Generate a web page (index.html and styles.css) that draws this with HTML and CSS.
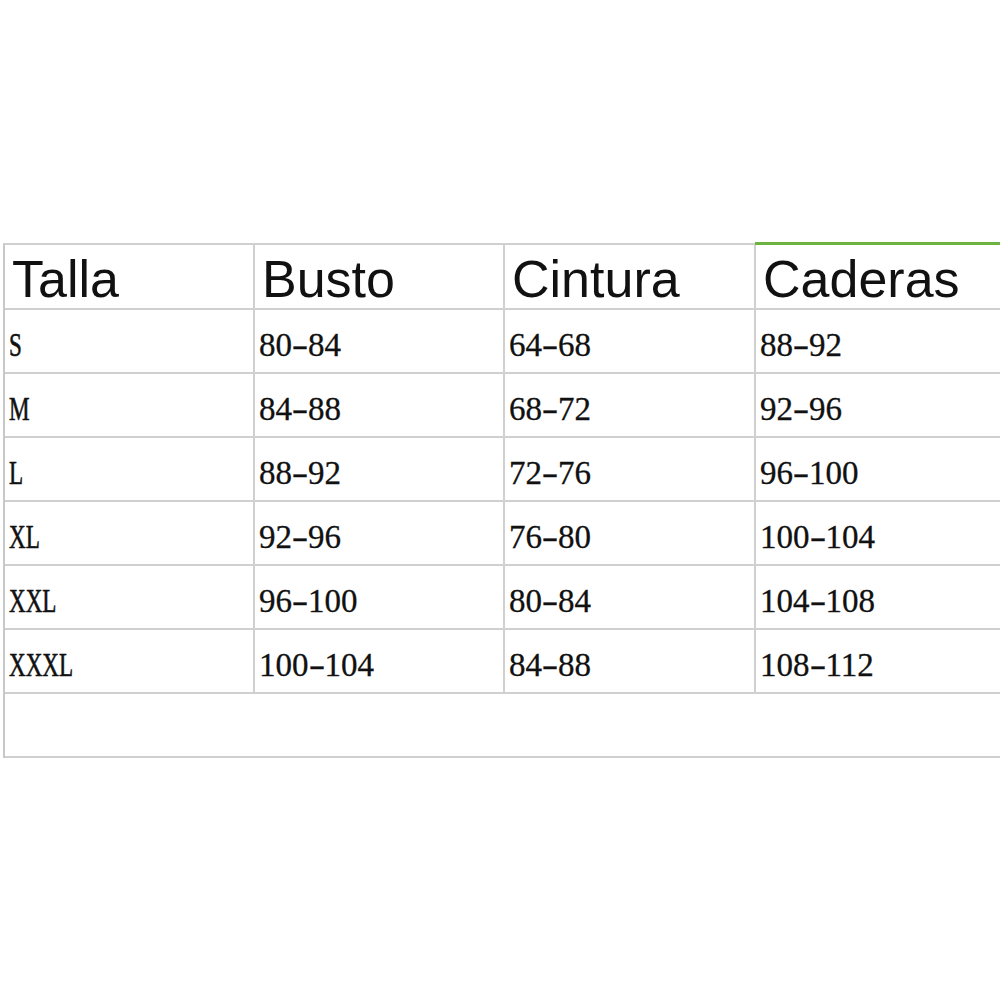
FILE: index.html
```html
<!DOCTYPE html>
<html lang="es">
<head>
<meta charset="utf-8">
<title>Tabla de tallas</title>
<link rel="stylesheet" href="styles.css">
</head>
<body>
<div class="sheet">
  <div class="cell head"><span>Talla</span></div>
  <div class="cell head"><span>Busto</span></div>
  <div class="cell head"><span>Cintura</span></div>
  <div class="cell head last active"><span>Caderas</span></div>

  <div class="cell"><span class="num size">S</span></div>
  <div class="cell"><span class="num">80<span class="dash">-</span>84</span></div>
  <div class="cell"><span class="num">64<span class="dash">-</span>68</span></div>
  <div class="cell last"><span class="num">88<span class="dash">-</span>92</span></div>

  <div class="cell"><span class="num size">M</span></div>
  <div class="cell"><span class="num">84<span class="dash">-</span>88</span></div>
  <div class="cell"><span class="num">68<span class="dash">-</span>72</span></div>
  <div class="cell last"><span class="num">92<span class="dash">-</span>96</span></div>

  <div class="cell"><span class="num size">L</span></div>
  <div class="cell"><span class="num">88<span class="dash">-</span>92</span></div>
  <div class="cell"><span class="num">72<span class="dash">-</span>76</span></div>
  <div class="cell last"><span class="num">96<span class="dash">-</span>100</span></div>

  <div class="cell"><span class="num size">XL</span></div>
  <div class="cell"><span class="num">92<span class="dash">-</span>96</span></div>
  <div class="cell"><span class="num">76<span class="dash">-</span>80</span></div>
  <div class="cell last"><span class="num">100<span class="dash">-</span>104</span></div>

  <div class="cell"><span class="num size">XXL</span></div>
  <div class="cell"><span class="num">96<span class="dash">-</span>100</span></div>
  <div class="cell"><span class="num">80<span class="dash">-</span>84</span></div>
  <div class="cell last"><span class="num">104<span class="dash">-</span>108</span></div>

  <div class="cell"><span class="num size">XXXL</span></div>
  <div class="cell"><span class="num">100<span class="dash">-</span>104</span></div>
  <div class="cell"><span class="num">84<span class="dash">-</span>88</span></div>
  <div class="cell last"><span class="num">108<span class="dash">-</span>112</span></div>

  <div class="cell empty"></div>
</div>
</body>
</html>
```

FILE: styles.css
```css
html, body {
  margin: 0;
  padding: 0;
  background: #ffffff;
}

body {
  width: 1000px;
  height: 1000px;
  overflow: hidden;
}

.sheet {
  margin-top: 243px;
  margin-left: 3px;
  display: grid;
  grid-template-columns: 250px 250px 251px 260px;
  grid-template-rows: 65px repeat(6, 64px) 64px;
  border-top: 2px solid #d0d0d0;
  border-left: 2px solid #c8c8c8;
  width: 1011px;
}

.cell {
  display: flex;
  align-items: center;
  padding-left: 4px;
  border-right: 2px solid #d0d0d0;
  border-bottom: 2px solid #d0d0d0;
  color: #111111;
}

.cell.last {
  border-right: none;
}

.head {
  padding-left: 7px;
  font-family: "Liberation Sans", Arial, sans-serif;
  font-size: 52px;
  line-height: 1;
  padding-top: 5px;
}

.head.active {
  position: relative;
}

.head.active::before {
  content: "";
  position: absolute;
  left: -1px;
  right: 0;
  top: -3px;
  height: 3px;
  background: #6db33f;
}

.num {
  display: inline-block;
  font-family: "Liberation Serif", "Times New Roman", serif;
  font-size: 33px;
  line-height: 1;
  -webkit-text-stroke: 0.3px #111111;
  padding-top: 8px;
  white-space: nowrap;
}

.dash {
  display: inline-block;
  width: 16px;
  text-align: center;
  transform: scaleX(1.5);
}

.size {
  transform: scaleX(0.7);
  transform-origin: 0 50%;
  -webkit-text-stroke: 0.6px #111111;
}

.empty {
  grid-column: 1 / -1;
  border-right: none;
}
```
